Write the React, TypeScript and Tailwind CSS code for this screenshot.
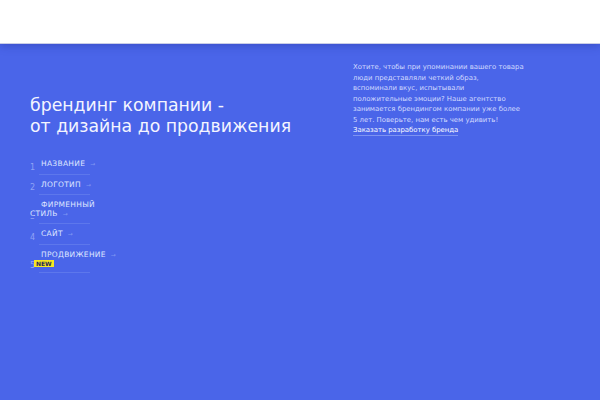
import React from 'react';

const items = [
  { n: '1', label: 'Название' },
  { n: '2', label: 'Логотип' },
  { n: '3', label: 'Фирменный стиль' },
  { n: '4', label: 'Сайт' },
  { n: '5', label: 'Продвижение', badge: true },
];

export default function App() {
  return (
    <div className="w-[600px] h-[400px] overflow-hidden flex flex-col bg-[#4a65e9] font-['DejaVu_Sans',sans-serif]">
      <header className="h-[44px] shrink-0 bg-white border-b border-[#c9cde6] shadow-[0_2px_8px_rgba(30,40,140,0.35)] relative z-10" />

      <main className="flex-1 flex">
        <section className="w-[323px] pl-[30px] pt-[51px]">
          <h1 className="text-[17.3px] leading-[21px] text-[#f4f5ff]">
            брендинг компании -<br />от дизайна до продвижения
          </h1>

          <ul className="mt-[23px] flex flex-col">
            {items.map(it => (
              <li key={it.n} className="relative w-[74px] pb-[12px] text-[7.5px] leading-[8.5px] uppercase tracking-[0.3px] text-[#dfe5ff]">
                <span className="absolute left-0 bottom-[9px] text-[8px] leading-[9px] text-[#8fa2f5]">{it.n}</span>
                <span className="absolute left-[9px] bottom-[6px] w-[51px] h-px bg-[#5d77ec]" />
                <span className="relative block indent-[11px]">
                  <span className="bg-[#4a65e9]">{it.label}</span>
                  <span className="ml-[5px] text-[6px] text-[#7f95f2]">→</span>
                </span>
                {it.badge && (
                  <span className="relative block ml-[4px] mt-[1px] w-fit bg-[#f6e823] text-[#2a2a55] text-[6px] leading-[7px] px-[2px] font-bold tracking-normal">NEW</span>
                )}
              </li>
            ))}
          </ul>
        </section>

        <section className="pl-[30px] pt-[18px]">
          <p className="text-[6.9px] leading-[10.5px] text-[#d3dbff] whitespace-nowrap">
            Хотите, чтобы при упоминании вашего товара<br />
            люди представляли четкий образ,<br />
            вспоминали вкус, испытывали<br />
            положительные эмоции? Наше агентство<br />
            занимается брендингом компании уже более<br />
            5 лет. Поверьте, нам есть чем удивить!
          </p>
          <a className="block w-fit text-[6.9px] leading-[10px] text-white border-b border-[#7d93f2]">Заказать разработку бренда</a>
        </section>
      </main>
    </div>
  );
}
